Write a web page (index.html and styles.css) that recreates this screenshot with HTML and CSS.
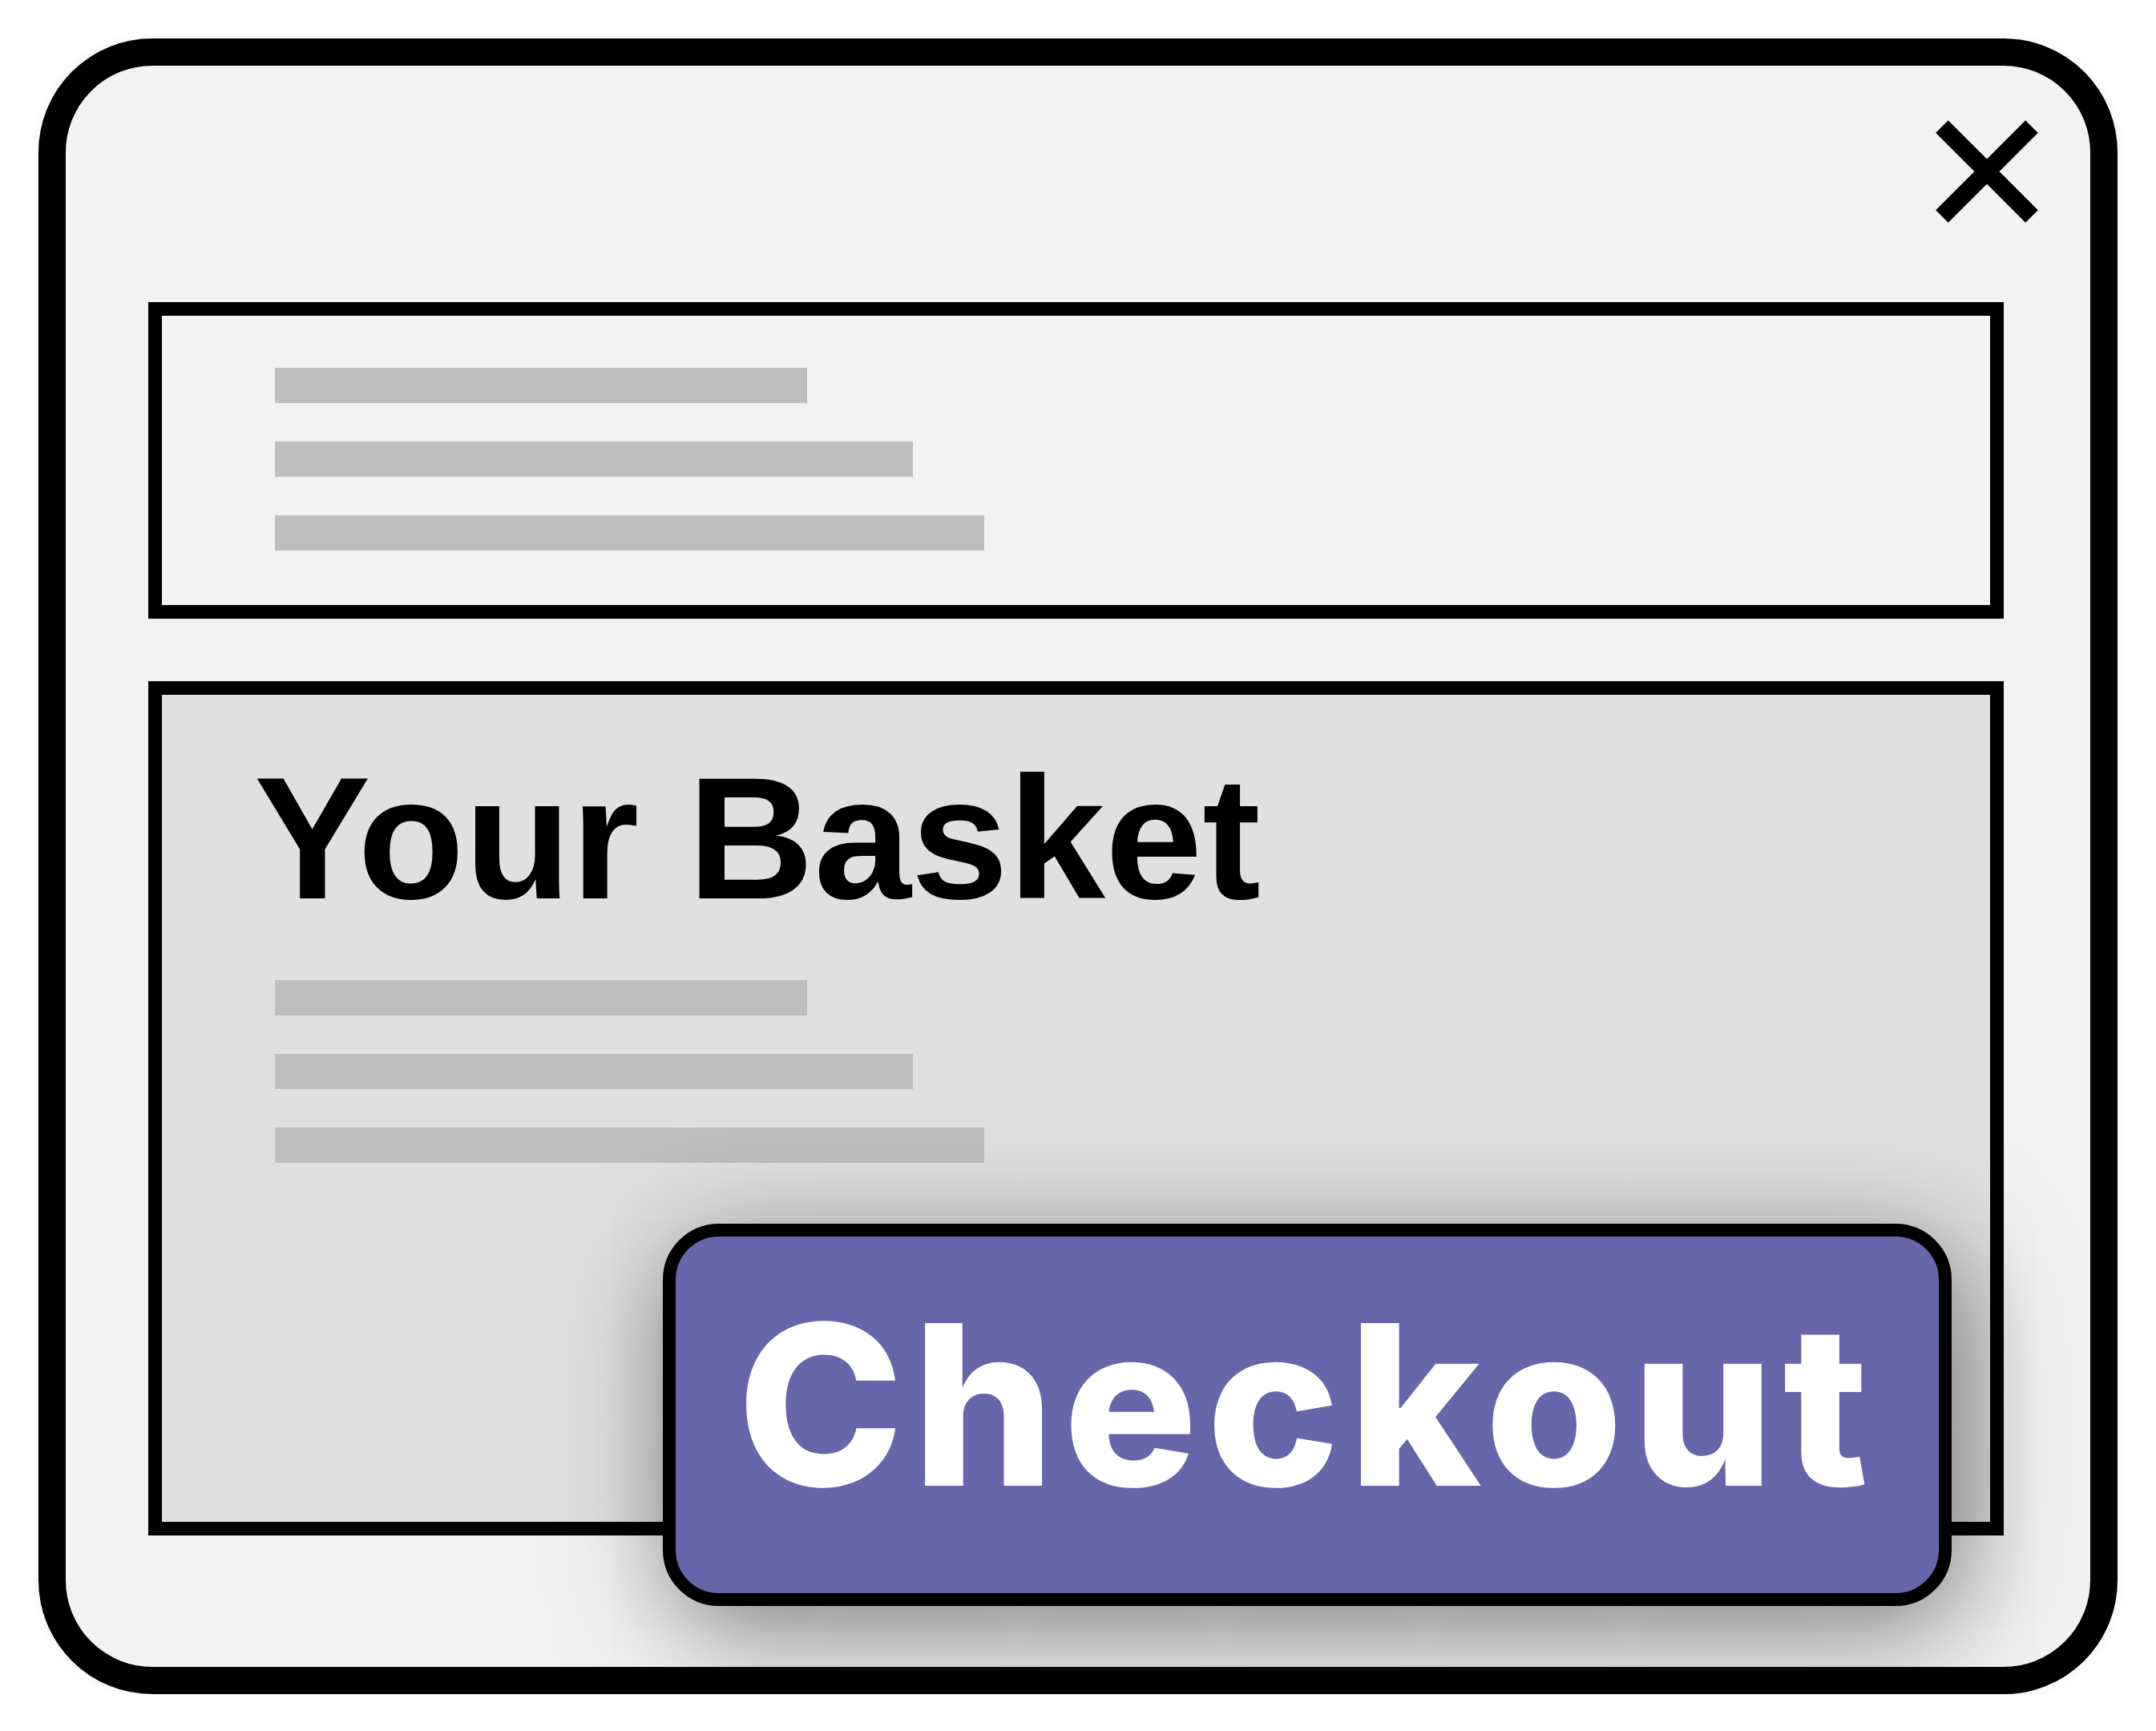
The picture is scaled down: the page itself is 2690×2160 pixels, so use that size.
FILE: index.html
```html
<!DOCTYPE html>
<html>
    <head>
        <title>Your Basket</title>
        <link rel="stylesheet" href="styles.css">
    </head>
    <body>
        <div class="dialog">
            <div class="dialog-header">
                <button class="close" aria-label="Close">
                    <svg width="128" height="128" viewBox="0 0 128 128">
                        <path d="M8 8 L120 120 M120 8 L8 120" stroke="#000" stroke-width="22" fill="none"/>
                    </svg>
                </button>
            </div>
            <div class="panel summary">
                <div class="line short"></div>
                <div class="line medium"></div>
                <div class="line long"></div>
            </div>
            <div class="panel basket">
                <h1 class="basket-title">Your Basket</h1>
                <div class="line short"></div>
                <div class="line medium"></div>
                <div class="line long"></div>
                <button class="checkout">Checkout</button>
            </div>
        </div>
    </body>
</html>
```

FILE: styles.css
```css
body {
    margin: 0px;
    background: #fff;
    font-family: "Liberation Sans", Arial, sans-serif;
}

.dialog {
    box-sizing: border-box;
    width: 2594px;
    height: 2066px;
    margin: 48px 0 0 48px;
    padding: 68px 65px 0 103px;
    border: 34px solid #000;
    border-radius: 142px;
    background: #f2f2f2;
    box-shadow: 0 0 14px rgba(0, 0, 0, 0.06);
}

.dialog-header {
    display: flex;
    justify-content: flex-end;
    height: 128px;
    margin-bottom: 99px;
}

.close {
    display: block;
    width: 128px;
    height: 128px;
    padding: 0;
    border: 0;
    background: none;
}

.close svg {
    display: block;
}

.panel {
    border: 17px solid #000;
    margin-right: 43px;
}

.summary {
    padding: 65px 0 68px 141px;
}

.line {
    height: 44px;
    background: #bebebe;
}

.line + .line {
    margin-top: 48px;
}

.line.short {
    width: 664px;
}

.line.medium {
    width: 796px;
}

.line.long {
    width: 885px;
}

.basket {
    position: relative;
    box-sizing: border-box;
    height: 1066px;
    margin-top: 78px;
    padding: 69px 0 0 141px;
    background: #e0e0e0;
}

.basket-title {
    margin: 0 0 67px -26px;
    font-size: 218px;
    line-height: 220px;
    font-weight: bold;
    color: #000;
}

/* button hangs over the bottom edge of the basket panel */
.checkout {
    position: absolute;
    right: 48px;
    bottom: -105px;
    box-sizing: border-box;
    width: 1608px;
    height: 477px;
    display: flex;
    align-items: center;
    justify-content: center;
    padding: 0 0 26px 0;
    border: 16px solid #000;
    border-radius: 70px;
    background: #6667aa;
    color: #fff;
    font-family: Inter, "Liberation Sans", sans-serif;
    font-size: 279px;
    font-weight: 800;
    line-height: 1;
    letter-spacing: 11px;
    box-shadow: 12px 30px 140px rgba(0, 0, 0, 0.5);
}
```
